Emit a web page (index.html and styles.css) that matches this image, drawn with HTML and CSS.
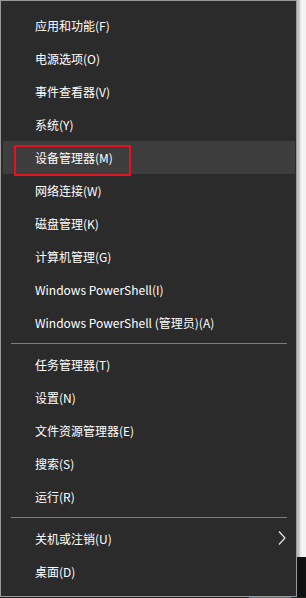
FILE: index.html
```html
<!DOCTYPE html>
<html lang="zh-CN">
<head>
    <meta charset="UTF-8">
    <meta name="viewport" content="width=device-width, initial-scale=1.0">
    <title>快速链接菜单</title>
    <link rel="stylesheet" href="styles.css">
</head>
<body>
    <div class="screen">
        <div class="menu">
            <div class="item">应用和功能(F)</div>
            <div class="item">电源选项(O)</div>
            <div class="item">事件查看器(V)</div>
            <div class="item">系统(Y)</div>
            <div class="item active">
                设备管理器(M)
                <span class="mark"></span> <!-- 红框标注 -->
            </div>
            <div class="item">网络连接(W)</div>
            <div class="item">磁盘管理(K)</div>
            <div class="item">计算机管理(G)</div>
            <div class="item">Windows PowerShell(I)</div>
            <div class="item">Windows PowerShell (管理员)(A)</div>

            <div class="sep"></div>

            <div class="item">任务管理器(T)</div>
            <div class="item">设置(N)</div>
            <div class="item">文件资源管理器(E)</div>
            <div class="item">搜索(S)</div>
            <div class="item">运行(R)</div>

            <div class="sep"></div>

            <div class="item sub">
                关机或注销(U)
                <svg class="arrow" width="8" height="14" viewBox="0 0 8 14">
                    <path d="M1 0.5 L7 7 L1 13.5" fill="none" stroke="#e8e8e8" stroke-width="1.2"/>
                </svg>
            </div>
            <div class="item">桌面(D)</div>
        </div>
        <div class="side">
            <div class="side-top"></div>
            <div class="side-bottom"></div>
        </div>
    </div>
    <div class="taskbar">
        <span class="task-blue"></span>
    </div>
</body>
</html>
```

FILE: styles.css
```css
body {
    margin: 0;
    background: #111;
    font-family: "Noto Sans CJK SC", "Noto Sans", sans-serif;
    font-size: 12px;
    overflow: hidden;
}

.screen {
    display: flex;
    height: 597px;
}

.menu {
    width: 295px;
    height: 595px;
    border: 1px solid #9a9a9a;
    background: #2b2b2b;
    padding: 8px 1px 0 2px;
    box-sizing: border-box;
    height: 597px;
    width: 297px;
    display: flex;
    flex-direction: column;
}

.item {
    position: relative;
    height: 33px;
    line-height: 33px;
    padding-left: 32px;
    color: #fff;
    white-space: nowrap;
}

.item.active {
    background: #3e3e3e;
}

/* annotation box */
.mark {
    position: absolute;
    left: 11px;
    top: 4px;
    width: 117px;
    height: 31px;
    border: 2px solid #e3141e;
    box-sizing: border-box;
}

.item .arrow {
    position: absolute;
    right: 9px;
    top: 9px;
}

.sep {
    height: 1px;
    margin: 4px 8px 4px 8px;
    background: #7d7d7d;
}

.side {
    flex: 1;
    display: flex;
    flex-direction: column;
}

.side-top {
    height: 557px;
    background: #f4f4f4;
    box-shadow: inset 4px 0 2px -1px #bdbdbd;
}

.side-bottom {
    flex: 1;
    background: #111;
}

.taskbar {
    height: 1px;
    background: #222;
    display: flex;
}

.task-blue {
    margin-left: 249px;
    width: 42px;
    background: #56778a;
}
```
